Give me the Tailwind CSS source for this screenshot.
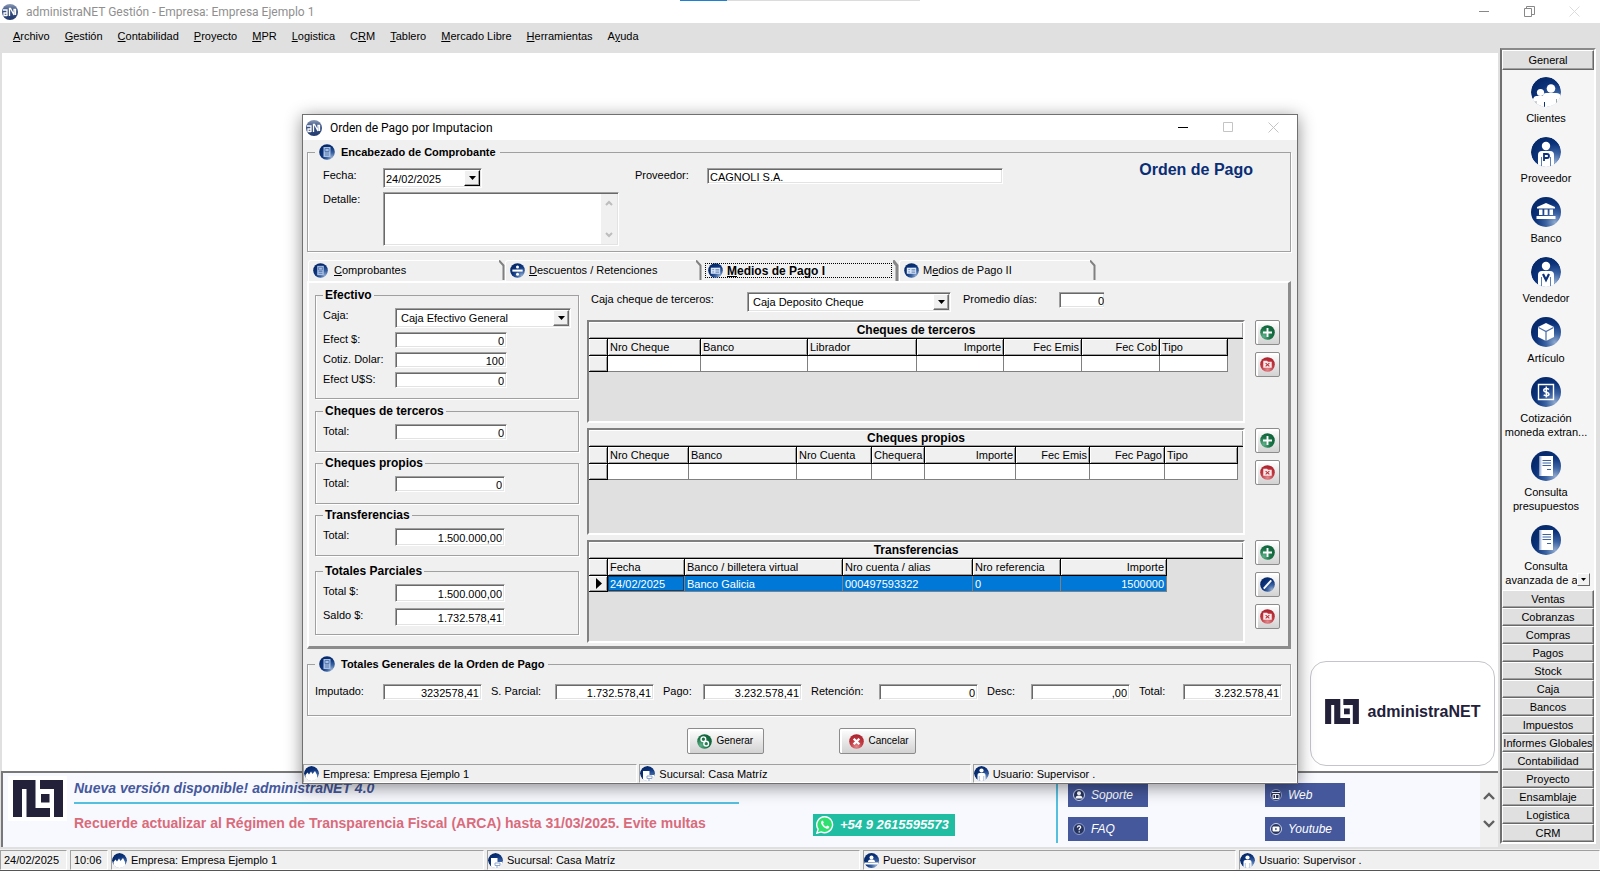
<!DOCTYPE html>
<html lang="es">
<head>
<meta charset="utf-8">
<title>administraNET Gestión - Empresa: Empresa Ejemplo 1</title>
<script src="https://cdn.jsdelivr.net/npm/@tailwindcss/browser@4"></script>
</head>
<body class="relative flex h-screen flex-col overflow-hidden bg-[#e0e0e0] font-['Liberation_Sans',Arial,sans-serif] text-[11px] leading-[14px] text-black">

<!-- Shared icon shapes -->
<svg class="absolute size-0" aria-hidden="true">
  <defs>
    <radialGradient id="navy" cx="80%" cy="85%" r="85%"><stop offset="0" stop-color="#8fa9cf"/><stop offset=".35" stop-color="#3c64a3"/><stop offset=".75" stop-color="#0b327a"/><stop offset="1" stop-color="#062a6b"/></radialGradient>
    <radialGradient id="green" cx="25%" cy="75%" r="90%"><stop offset="0" stop-color="#5fb08a"/><stop offset=".5" stop-color="#1a7547"/><stop offset="1" stop-color="#0d5f38"/></radialGradient>
    <radialGradient id="red" cx="50%" cy="85%" r="85%"><stop offset="0" stop-color="#e08a8d"/><stop offset=".5" stop-color="#c23a42"/><stop offset="1" stop-color="#a9202b"/></radialGradient>
    <linearGradient id="orb" x1="0" y1="0" x2="0" y2="1"><stop offset="0" stop-color="#8d9bb5"/><stop offset=".4" stop-color="#3c5486"/><stop offset="1" stop-color="#22396d"/></linearGradient>
    <clipPath id="disc"><circle cx="15" cy="15" r="15"/></clipPath>
  </defs>
  <symbol id="i-app" viewBox="0 0 16 16"><circle cx="8" cy="8" r="8" fill="url(#orb)"/><path d="M1 6h4v6M5 9H2v2.500h3M7.500 12V4.500h1L12 11V5.500h1.500V11" fill="none" stroke="#fff" stroke-width="1.300"/></symbol>
  <symbol id="i-clients" viewBox="0 0 30 30"><g clip-path="url(#disc)"><circle cx="15" cy="15" r="15" fill="url(#navy)"/><circle cx="20" cy="11.500" r="4.300" fill="#fff"/><path d="M12 30V19q0-3 3-3h10q4 0 5 3v11z" fill="#fff"/><circle cx="9.500" cy="15.500" r="3.600" fill="#fff"/><path d="M2 30v-8q1-3 3-3h8q3 0 3 3v8z" fill="#fff"/><path d="M13.500 25v5" stroke="#0b327a" stroke-width="1"/><path d="M25.500 22v5M5 24v3" stroke="#9aa" stroke-width="1"/></g></symbol>
  <symbol id="i-person" viewBox="0 0 30 30"><g clip-path="url(#disc)"><circle cx="15" cy="15" r="15" fill="url(#navy)"/><circle cx="15" cy="9" r="4.200" fill="#fff"/><path d="M7 30V18q0-4 4-4h8q4 0 4 4v12z" fill="#fff"/><path d="M10.500 20v10M19.500 20v10" stroke="#5f7fb2" stroke-width="1"/></g></symbol>
  <symbol id="i-provider" viewBox="0 0 30 30"><use href="#i-person"/><path d="M13 24v-7h3q2 0 2 2t-2 2h-3" fill="none" stroke="#0b327a" stroke-width="1.800"/></symbol>
  <symbol id="i-seller" viewBox="0 0 30 30"><use href="#i-person"/><path d="M12 17l3 6 3-6" fill="none" stroke="#0b327a" stroke-width="2.200"/></symbol>
  <symbol id="i-bank" viewBox="0 0 30 30"><circle cx="15" cy="15" r="15" fill="url(#navy)"/><path d="M15 6l9 4v1.500H6V10zM8 12.500h3.500V18H8zM13.300 12.500h3.400V18h-3.400zM18.500 12.500H22V18h-3.500zM5.500 19h19v3h-19z" fill="#fff"/></symbol>
  <symbol id="i-box" viewBox="0 0 30 30"><circle cx="15" cy="15" r="15" fill="url(#navy)"/><path d="M15 6l8 4v10l-8 4-8-4V10z" fill="#fff"/><path d="M7.500 10.500L15 14.500l7.500-4M15 14.500V24" fill="none" stroke="#4a6ea8" stroke-width="1.200"/></symbol>
  <symbol id="i-money" viewBox="0 0 30 30"><circle cx="15" cy="15" r="15" fill="url(#navy)"/><path d="M7.500 7.500h15v15h-15z" fill="none" stroke="#fff" stroke-width="1.400"/><path d="M18 12.300q-3-1.800-5 0-1 2 2 2.700t3 2.800q-2 2-5.300 0M15.300 9.500v11" fill="none" stroke="#fff" stroke-width="1.500"/></symbol>
  <symbol id="i-doc" viewBox="0 0 30 30"><circle cx="15" cy="15" r="15" fill="url(#navy)"/><path d="M8.500 5h13.500v20H8.500z" fill="#fff"/><path d="M9.800 5v20" stroke="#9db2d6" stroke-width="1"/><path d="M11.500 9.500h8.500M11.500 12h8.500M11.500 14.500h8.500M16 18.500h4" stroke="#3b62a2" stroke-width="1"/></symbol>
  <symbol id="i-sheet" viewBox="0 0 16 16"><circle cx="8" cy="8" r="7.800" fill="url(#navy)"/><path d="M4.500 3h7v10h-7z" fill="#a9bfe2"/><path d="M6 4.500h4v3H6zM6 9h4M6 11h4" fill="none" stroke="#4f74b0" stroke-width=".9"/></symbol>
  <symbol id="i-divide" viewBox="0 0 16 16"><circle cx="8" cy="8" r="7.800" fill="url(#navy)"/><path d="M2.500 7h11v2.200h-11z" fill="#fff"/><circle cx="8" cy="4.300" r="1.600" fill="#fff"/><circle cx="8" cy="11.900" r="1.600" fill="#fff"/></symbol>
  <symbol id="i-card" viewBox="0 0 16 16"><circle cx="8" cy="8" r="7.800" fill="url(#navy)"/><path d="M3 5h10v6.500H3z" fill="#dbe6f8"/><path d="M4.500 7h2M4.500 9.500h2M8 7h4M8 8.500h4M8 10h4" stroke="#5c80ba" stroke-width=".8"/></symbol>
  <symbol id="i-factory" viewBox="0 0 30 30"><g clip-path="url(#disc)"><circle cx="15" cy="15" r="15" fill="url(#navy)"/><path d="M3 30V18l4-5 3 4 4-6 3 5 5-6 4 8v12z" fill="#fff"/></g></symbol>
  <symbol id="i-branch" viewBox="0 0 30 30"><g clip-path="url(#disc)"><circle cx="15" cy="15" r="15" fill="url(#navy)"/><path d="M6 10h13v8h9v12H6z" fill="#fff"/><path d="M14 20h10v5H14zM18 25v5" fill="none" stroke="#8fa4cc" stroke-width="2"/></g></symbol>
  <symbol id="i-desk" viewBox="0 0 30 30"><circle cx="15" cy="15" r="15" fill="url(#navy)"/><circle cx="15" cy="9" r="4" fill="#fff"/><path d="M8 18q0-5 5-5h4q5 0 5 5zM2 19h26v4H2z" fill="#fff"/></symbol>
  <symbol id="i-add" viewBox="0 0 16 16"><circle cx="8" cy="8" r="7.800" fill="url(#green)"/><path d="M8 3.200v9.600M3.200 8h9.600" stroke="#fff" stroke-width="2"/></symbol>
  <symbol id="i-remove" viewBox="0 0 16 16"><circle cx="8" cy="8" r="7.800" fill="url(#red)"/><path d="M3.500 4h4l1 1h4v6.500h-9z" fill="#fbe9ea"/><path d="M6 6.500l4 3.500M10 6.500L6 10" stroke="#b8323b" stroke-width="1.200"/></symbol>
  <symbol id="i-edit" viewBox="0 0 16 16"><circle cx="8" cy="8" r="7.800" fill="url(#navy)"/><path d="M4 12.500L12 3.500" stroke="#fff" stroke-width="2"/></symbol>
  <symbol id="i-gears" viewBox="0 0 16 16"><circle cx="8" cy="8" r="7.800" fill="url(#green)"/><circle cx="6.800" cy="5.600" r="2.500" fill="none" stroke="#fff" stroke-width="1.500"/><circle cx="9.800" cy="10.300" r="2.500" fill="none" stroke="#fff" stroke-width="1.500"/></symbol>
  <symbol id="i-cancel" viewBox="0 0 16 16"><circle cx="8" cy="8" r="7.800" fill="url(#red)"/><path d="M5 5l6 6M11 5l-6 6" stroke="#fff" stroke-width="2.400"/></symbol>
  <symbol id="i-mark" viewBox="0 0 50 37"><path d="M0 0h22.500v28H37v9H13.500V9H9v28H0zM27 0h23v37h-9V9H27zM28 14h8.500v8.500H28z" fill="#23203a"/></symbol>
</svg>

<!-- Main window caption -->
<header class="flex h-[23px] shrink-0 items-center bg-white pl-0.5 font-[Roboto,'Noto_Sans',sans-serif] text-[12px] text-[#8f8f8f]">
  <svg class="size-4"><use href="#i-app"/></svg>
  <h1 class="ml-2">administraNET Gestión - Empresa: Empresa Ejemplo 1</h1>
  <div class="ml-auto flex gap-5">
    <button class="flex h-[23px] w-[25px] items-center justify-center" aria-label="Minimizar"><svg class="size-[11px]" viewBox="0 0 11 11"><path d="M0 5.500h10" stroke="#888"/></svg></button>
    <button class="flex h-[23px] w-[25px] items-center justify-center" aria-label="Restaurar"><svg class="size-[11px]" viewBox="0 0 11 11"><path d="M.5 2.500h7v8h-7zM2.500 2.500v-2h8v8h-3" fill="none" stroke="#888"/></svg></button>
    <button class="mr-[13px] flex h-[23px] w-[25px] items-center justify-center" aria-label="Cerrar"><svg class="size-[11px]" viewBox="0 0 11 11"><path d="M.5.5l10 10M10.500.5l-10 10" stroke="#dcdcdc"/></svg></button>
  </div>
</header>
<div class="absolute top-0 left-[680px] h-px w-[240px] border-l-[47px] border-[#1f7fd0] bg-[#dcdcdc]"></div>

<div class="flex min-h-0 flex-1">
  <div class="flex min-w-0 flex-1 flex-col">
    <nav class="flex h-[30px] shrink-0 items-center gap-[15px] pl-[13px] pb-1">
      <a href="#"><u>A</u>rchivo</a>
      <a href="#"><u>G</u>estión</a>
      <a href="#"><u>C</u>ontabilidad</a>
      <a href="#"><u>P</u>royecto</a>
      <a href="#"><u>M</u>PR</a>
      <a href="#"><u>L</u>ogistica</a>
      <a href="#">C<u>R</u>M</a>
      <a href="#"><u>T</u>ablero</a>
      <a href="#"><u>M</u>ercado Libre</a>
      <a href="#"><u>H</u>erramientas</a>
      <a href="#">A<u>y</u>uda</a>
    </nav>

    <main class="mr-0.5 ml-0.5 flex flex-1 items-end justify-end bg-white pr-[3px] pb-[5px]">
      <div class="flex h-[105px] w-[185px] items-center justify-center gap-[9px] rounded-2xl border border-[#c3c5ca] pb-1">
        <svg class="h-[25px] w-[34px]"><use href="#i-mark"/></svg>
        <span class="text-[16px] font-bold text-[#23203a]">administraNET</span>
      </div>
    </main>

    <!-- News banner -->
    <section class="mb-0.5 ml-px flex h-[76px] shrink-0 border-t-2 border-l-2 border-[#787878] bg-[#f8f9ff] mr-0.5">
      <div class="mt-[3px] ml-[5px] flex h-[45px] w-[59px] items-center justify-center bg-white"><svg class="h-[37px] w-[50px]"><use href="#i-mark"/></svg></div>
      <div class="ml-[7px] w-[665px]">
        <h2 class="mt-[5px] h-[26px] border-b-2 border-[#55bfe0] text-[14px] leading-5 font-bold text-[#45589c] italic">Nueva versión disponible! administraNET 4.0</h2>
        <p class="mt-[9px] text-[14px] leading-5 font-bold whitespace-nowrap text-[#d96b7b]">Recuerde actualizar al Régimen de Transparencia Fiscal (ARCA) hasta 31/03/2025. Evite multas</p>
      </div>
      <a href="#" class="mt-[41px] ml-[74px] flex h-[22px] w-[142px] items-center gap-1.5 bg-[#20bda3] pl-[3px] text-[13px] font-bold text-white italic">
        <svg class="size-[18px] shrink-0" viewBox="0 0 18 18"><path d="M9 .7a8 8 0 1 1-3.900 15.200L.8 17.200l1.300-4.100A8 8 0 0 1 9 .7z" fill="#2fe070" stroke="#fff" stroke-width="1.400"/><path d="M6 4.700q-1.500 1-.8 3 1.600 3.700 5.300 5 2 .4 2.700-1.300v-.9l-2-1-1.200 1.200q-2-.8-3-3l.8-1-.8-2z" fill="#fff"/></svg>
        +54 9 2615595573
      </a>
      <div class="mt-0.5 mb-1 ml-[101px] w-0.5 bg-[#55bfe0]"></div>
      <div class="mt-[10px] ml-[10px] grid grid-cols-[80px_80px] grid-rows-[24px_24px] content-start gap-x-[117px] gap-y-[10px] text-[12px] text-white italic">
        <a href="#" class="flex items-center gap-1.5 bg-[#45589c] pl-[5px]"><svg class="size-3" viewBox="0 0 12 12"><circle cx="6" cy="6" r="5.500" fill="#26335f" stroke="#cfd8f0"/><circle cx="6" cy="4.300" r="2" fill="#fff"/><path d="M2.500 9.500q0-3 3.500-3t3.500 3z" fill="#fff"/></svg>Soporte</a>
        <a href="#" class="flex items-center gap-1.5 bg-[#45589c] pl-[5px]"><svg class="size-3" viewBox="0 0 12 12"><circle cx="6" cy="6" r="5.500" fill="#26335f" stroke="#8fa0cf"/><path d="M2 3.500h8M3 5.500h6v4H3zM5.500 5.500v4" fill="none" stroke="#fff"/></svg>Web</a>
        <a href="#" class="flex items-center gap-1.5 bg-[#45589c] pl-[5px]"><svg class="size-3" viewBox="0 0 12 12"><circle cx="6" cy="6" r="5.500" fill="#26335f" stroke="#8fa0cf"/><path d="M4.300 4.500q.3-1.700 1.900-1.600 1.800.3 1.400 1.800L6.200 6.200v1M6.200 8.300v1.200" fill="none" stroke="#fff" stroke-width="1.200"/></svg>FAQ</a>
        <a href="#" class="flex items-center gap-1.5 bg-[#45589c] pl-[5px]"><svg class="size-3" viewBox="0 0 12 12"><circle cx="6" cy="6" r="5.500" fill="#26335f" stroke="#cfd8f0"/><rect x="2.500" y="3.500" width="7" height="5" rx="1" fill="#fff"/><path d="M5.300 4.800L7.300 6l-2 1.200z" fill="#26335f"/></svg>Youtube</a>
      </div>
      <div class="ml-auto flex w-[18px] flex-col items-center justify-evenly bg-[#f0f0f0]">
        <svg class="h-2 w-3" viewBox="0 0 12 8"><path d="M1 7l5-5 5 5" fill="none" stroke="#606060" stroke-width="2.400"/></svg>
        <svg class="h-2 w-3" viewBox="0 0 12 8"><path d="M1 1l5 5 5-5" fill="none" stroke="#606060" stroke-width="2.400"/></svg>
      </div>
    </section>
  </div>

  <!-- Shortcut bar -->
  <aside class="relative mt-[25px] mr-1 mb-[5px] flex w-24 shrink-0 flex-col border-2 border-t-[#8a8a8a] border-r-white border-b-white border-l-[#707070] bg-[#f5f5f5] text-center">
    <button class="h-5 shrink-0 border border-t-white border-r-[#696969] border-b-[#696969] border-l-white bg-[#e0e0e0] shadow-[inset_-1px_-1px_0_#a0a0a0]">General</button>
    <ul class="flex min-h-0 flex-1 flex-col items-center gap-3 overflow-hidden pt-[7px] pr-1 whitespace-nowrap [&_a]:flex [&_a]:flex-col [&_a]:items-center [&_a]:gap-1 [&_svg]:size-[30px]">
      <li><a href="#"><svg><use href="#i-clients"/></svg>Clientes</a></li>
      <li><a href="#"><svg><use href="#i-provider"/></svg>Proveedor</a></li>
      <li><a href="#"><svg><use href="#i-bank"/></svg>Banco</a></li>
      <li><a href="#"><svg><use href="#i-seller"/></svg>Vendedor</a></li>
      <li><a href="#"><svg><use href="#i-box"/></svg>Artículo</a></li>
      <li><a href="#"><svg><use href="#i-money"/></svg><span>Cotización<br>moneda extran...</span></a></li>
      <li><a href="#"><svg><use href="#i-doc"/></svg><span>Consulta<br>presupuestos</span></a></li>
      <li><a href="#"><svg><use href="#i-doc"/></svg><span>Consulta<br>avanzada de a...</span></a></li>
    </ul>
    <button class="absolute right-1 bottom-[256px] flex size-[13px] items-center justify-center border border-t-white border-r-[#696969] border-b-[#696969] border-l-white bg-[#f0f0f0]" aria-label="Desplazar"><svg class="h-[3px] w-[5px]" viewBox="0 0 5 3"><path d="M0 0h5L2.500 3z"/></svg></button>
    <div class="flex shrink-0 flex-col [&>button]:h-[18px] [&>button]:border [&>button]:border-t-white [&>button]:border-r-[#696969] [&>button]:border-b-[#696969] [&>button]:border-l-white [&>button]:bg-[#e0e0e0] [&>button]:whitespace-nowrap [&>button]:shadow-[inset_-1px_-1px_0_#a0a0a0]">
      <button>Ventas</button><button>Cobranzas</button><button>Compras</button><button>Pagos</button><button>Stock</button><button>Caja</button><button>Bancos</button><button>Impuestos</button><button>Informes Globales</button><button>Contabilidad</button><button>Proyecto</button><button>Ensamblaje</button><button>Logistica</button><button>CRM</button>
    </div>
  </aside>
</div>

<!-- Main status bar -->
<footer class="flex h-[22px] shrink-0 gap-[3px] border-b border-[#555] bg-[#f0f0f0] pt-px [&>div]:flex [&>div]:items-center [&>div]:gap-1 [&>div]:border [&>div]:border-t-[#a0a0a0] [&>div]:border-r-white [&>div]:border-b-white [&>div]:border-l-[#a0a0a0] [&_svg]:size-[15px]">
  <div class="w-[67px] pl-[3px]">24/02/2025</div>
  <div class="w-[38px] pl-[3px]">10:06</div>
  <div class="flex-[373]"><svg><use href="#i-factory"/></svg>Empresa: Empresa Ejemplo 1</div>
  <div class="flex-[373]"><svg><use href="#i-branch"/></svg>Sucursal: Casa Matríz</div>
  <div class="flex-[373]"><svg><use href="#i-desk"/></svg>Puesto: Supervisor</div>
  <div class="flex-[361]"><svg><use href="#i-person"/></svg>Usuario: Supervisor .</div>
</footer>

<!-- Payment order window -->
<section role="dialog" aria-labelledby="dlg" class="absolute top-[114px] right-[302px] left-[302px] border border-[#707070] bg-[#f0f0f0] shadow-[0_3px_16px_rgba(0,0,0,.45)]">
  <header class="flex h-[25px] items-center bg-white pl-[3px] font-[Roboto,'Noto_Sans',sans-serif] text-[12px]">
    <svg class="size-4"><use href="#i-app"/></svg>
    <h2 id="dlg" class="ml-2">Orden de Pago por Imputacion</h2>
    <div class="ml-auto flex gap-5 pr-[11px]">
      <button class="flex h-[25px] w-[25px] items-center justify-center" aria-label="Minimizar"><svg class="size-[11px]" viewBox="0 0 11 11"><path d="M0 5.500h10" stroke="#000"/></svg></button>
      <button class="flex h-[25px] w-[25px] items-center justify-center" aria-label="Maximizar"><svg class="size-[11px]" viewBox="0 0 11 11"><path d="M.5.5h9v9h-9z" fill="none" stroke="#c4c4c4"/></svg></button>
      <button class="flex h-[25px] w-[25px] items-center justify-center" aria-label="Cerrar"><svg class="size-[11px]" viewBox="0 0 11 11"><path d="M.5.5l10 10M10.500.5l-10 10" stroke="#c4c4c4"/></svg></button>
    </div>
  </header>

  <form class="pt-1 pr-[6px] pl-1 [&_fieldset]:border [&_fieldset]:border-[#a0a0a0] [&_fieldset]:shadow-[1px_1px_0_#fff,inset_1px_0_0_#fff] [&_input]:h-4 [&_input]:border [&_input]:border-t-[#a0a0a0] [&_input]:border-r-white [&_input]:border-b-white [&_input]:border-l-[#a0a0a0] [&_input]:bg-white [&_input]:px-0.5 [&_input]:pt-px [&_input]:shadow-[inset_1px_1px_0_#696969,inset_-1px_-1px_0_#e3e3e3] [&_label]:leading-[14px] [&_legend]:font-bold [&_select]:appearance-none [&_select]:border [&_select]:border-t-[#a0a0a0] [&_select]:border-r-white [&_select]:border-b-white [&_select]:border-l-[#a0a0a0] [&_select]:bg-white [&_select]:pl-[5px] [&_select]:shadow-[inset_1px_1px_0_#696969,inset_-1px_-1px_0_#e3e3e3]">
    <fieldset class="flex items-start pr-[37px] pb-[5px] pl-[15px]">
      <legend class="-ml-2 flex h-4 items-center gap-1.5 px-1"><svg class="size-4"><use href="#i-sheet"/></svg>Encabezado de Comprobante</legend>
      <div class="mt-2 grid grid-cols-[60px_236px] items-start gap-y-1">
        <label for="fecha">Fecha:</label>
        <div class="relative w-[99px]">
          <input id="fecha" value="24/02/2025" class="block h-5! w-full">
          <button type="button" class="absolute top-0.5 right-0.5 flex h-4 w-4 items-center justify-center border border-t-white border-r-black border-b-black border-l-white bg-[#f0f0f0] shadow-[inset_-1px_-1px_0_#a0a0a0]" aria-label="Abrir calendario"><svg class="h-1 w-[7px]" viewBox="0 0 7 4"><path d="M0 0h7L3.500 4z"/></svg></button>
        </div>
        <label for="detalle">Detalle:</label>
        <div class="relative h-[54px]">
          <textarea id="detalle" class="block h-full w-full resize-none border border-t-[#a0a0a0] border-r-white border-b-white border-l-[#a0a0a0] bg-white shadow-[inset_1px_1px_0_#696969,inset_-1px_-1px_0_#e3e3e3]"></textarea>
          <div class="absolute top-0.5 right-0.5 bottom-0.5 flex w-4 flex-col items-center justify-between bg-[#f0f0f0] py-[6px]">
            <svg class="h-[6px] w-2" viewBox="0 0 8 6"><path d="M1 5l3-3 3 3" fill="none" stroke="#bdbdbd" stroke-width="2"/></svg>
            <svg class="h-[6px] w-2" viewBox="0 0 8 6"><path d="M1 1l3 3 3-3" fill="none" stroke="#bdbdbd" stroke-width="2"/></svg>
          </div>
        </div>
      </div>
      <label for="prov" class="mt-2 ml-4 w-[72px]">Proveedor:</label>
      <input id="prov" value="CAGNOLI S.A." class="mt-2 w-[296px]">
      <strong class="ml-auto text-[16px] leading-5 text-[#0a2d75]">Orden de Pago</strong>
    </fieldset>

    <!-- Tabs -->
    <div role="tablist" class="mt-2 flex h-[21px] pl-px [&>button]:flex [&>button]:w-[197px] [&>button]:items-stretch [&_i]:flex-1 [&_i]:rounded-tl-[3px] [&_i]:border-t [&_i]:border-l [&_i]:border-white [&_i]:not-italic [&_i]:flex [&_i]:items-center [&_i]:gap-1 [&_i]:pb-0.5 [&_i]:pl-1">
      <button type="button" role="tab"><i class="gap-1.5!"><svg class="size-[15px]"><use href="#i-sheet"/></svg><span><u>C</u>omprobantes</span></i><svg class="h-5 w-[6px]" viewBox="0 0 6 20"><path d="M0 .5l4.500 5V20" fill="none" stroke="#808080" stroke-width="2"/></svg></button>
      <button type="button" role="tab"><i><svg class="size-[15px]"><use href="#i-divide"/></svg><span><u>D</u>escuentos / Retenciones</span></i><svg class="h-5 w-[6px]" viewBox="0 0 6 20"><path d="M0 .5l4.500 5V20" fill="none" stroke="#808080" stroke-width="2"/></svg></button>
      <button type="button" role="tab" aria-selected="true" class="text-[12px] font-bold"><i class="my-[3px] mr-px ml-[3px] rounded-none! border! border-dotted! border-black! pb-0! pl-0.5!"><svg class="size-[15px]"><use href="#i-card"/></svg><span><u>M</u>edios de Pago I</span></i><svg class="h-[21px] w-[6px]" viewBox="0 0 6 21"><path d="M0 .5l4 5V21" fill="none" stroke="#888" stroke-width="3"/></svg></button>
      <button type="button" role="tab"><i><svg class="size-[15px]"><use href="#i-card"/></svg><span>M<u>e</u>dios de Pago II</span></i><svg class="h-5 w-[6px]" viewBox="0 0 6 20"><path d="M0 .5l4.500 5V20" fill="none" stroke="#808080" stroke-width="2"/></svg></button>
    </div>

    <div role="tabpanel" class="flex gap-2 border-t-2 border-r-3 border-b-3 border-l-2 border-t-white border-r-[#8c8c8c] border-b-[#8c8c8c] border-l-white pr-2 pb-[3px] pl-[6px]">
      <div class="flex w-[264px] shrink-0 flex-col gap-1 pt-[5px] [&_fieldset]:grid [&_fieldset]:grid-cols-[72px_auto] [&_fieldset]:items-start [&_fieldset]:justify-start [&_fieldset]:gap-y-1 [&_fieldset]:px-[7px] [&_fieldset]:pt-[6px] [&_fieldset]:pb-[11px] [&_input]:w-28 [&_input]:text-right [&_legend]:px-0.5 [&_legend]:text-[12px]">
        <fieldset class="mb-px pb-[10px]!">
          <legend>Efectivo</legend>
          <label for="caja">Caja:</label>
          <div class="relative">
            <select id="caja" class="block h-5 w-44"><option>Caja Efectivo General</option></select>
            <span class="pointer-events-none absolute top-0.5 right-0.5 flex size-4 items-center justify-center border border-t-white border-r-[#696969] border-b-[#696969] border-l-white bg-[#f0f0f0] shadow-[inset_-1px_-1px_0_#a0a0a0]"><svg class="h-1 w-[7px]" viewBox="0 0 7 4"><path d="M0 0h7L3.500 4z"/></svg></span>
          </div>
          <label for="ef">Efect $:</label><input id="ef" value="0">
          <label for="cot">Cotiz. Dolar:</label><input id="cot" value="100">
          <label for="efu">Efect U$S:</label><input id="efu" value="0">
        </fieldset>
        <fieldset>
          <legend>Cheques de terceros</legend>
          <label for="ct">Total:</label><input id="ct" value="0">
        </fieldset>
        <fieldset>
          <legend>Cheques propios</legend>
          <label for="cp">Total:</label><input id="cp" value="0" class="w-[110px]!">
        </fieldset>
        <fieldset class="pb-[9px]!">
          <legend>Transferencias</legend>
          <label for="tr">Total:</label><input id="tr" value="1.500.000,00" class="h-[18px]! w-[110px]!">
        </fieldset>
        <fieldset class="mt-1 gap-y-[6px]! pb-2!">
          <legend>Totales Parciales</legend>
          <label for="tp">Total $:</label><input id="tp" value="1.500.000,00" class="h-[18px]! w-[110px]!">
          <label for="sp">Saldo $:</label><input id="sp" value="1.732.578,41" class="h-[18px]! w-[110px]!">
        </fieldset>
      </div>

      <div class="min-w-0 flex-1 pt-[9px]">
        <div class="mb-2 flex h-5 items-start pl-1">
          <label for="cch" class="w-[156px]">Caja cheque de terceros:</label>
          <div class="relative">
            <select id="cch" class="block h-5 w-[204px]"><option>Caja Deposito Cheque</option></select>
            <span class="pointer-events-none absolute top-0.5 right-0.5 flex size-4 items-center justify-center border border-t-white border-r-[#696969] border-b-[#696969] border-l-white bg-[#f0f0f0] shadow-[inset_-1px_-1px_0_#a0a0a0]"><svg class="h-1 w-[7px]" viewBox="0 0 7 4"><path d="M0 0h7L3.500 4z"/></svg></span>
          </div>
          <label for="pd" class="ml-3 w-24">Promedio días:</label>
          <input id="pd" value="0" class="w-[45px] border-r-0! pr-0! text-right">
        </div>

        <!-- Grids with their row buttons -->
        <div class="flex flex-col gap-[5px] [&_aside]:flex [&_aside]:flex-col [&_aside]:gap-[7px] [&_aside>button]:flex [&_aside>button]:size-[25px] [&_aside>button]:items-center [&_aside>button]:justify-center [&_aside>button]:rounded-[2px] [&_aside>button]:border [&_aside>button]:border-[#8c8c8c] [&_aside>button]:bg-linear-to-b [&_aside>button]:from-white [&_aside>button]:to-[#d2d2d2] [&_aside>button]:shadow-[inset_2px_2px_0_#fff] [&_aside_svg]:size-[15px] [&>div]:flex [&>div]:justify-between [&_h3]:h-[17px] [&_h3]:border-b [&_h3]:border-black [&_h3]:text-center [&_h3]:text-[12px] [&_h3]:leading-4 [&_h3]:font-bold [&_h3]:shadow-[inset_1px_1px_0_#fff,inset_-1px_-1px_0_#a0a0a0] [&_h3]:bg-[#f0f0f0] [&_section]:w-[658px] [&_section]:border-2 [&_section]:border-t-[#808080] [&_section]:border-r-white [&_section]:border-b-white [&_section]:border-l-[#808080] [&_section]:bg-[#e0e0e0] [&_table]:w-0 [&_table]:table-fixed [&_table]:border-separate [&_table]:border-spacing-0 [&_table]:whitespace-nowrap [&_thead_th]:h-[17px] [&_thead_th]:border-r [&_thead_th]:border-b [&_thead_th]:border-black [&_thead_th]:px-0.5 [&_thead_th]:text-left [&_thead_th]:font-normal [&_thead_th]:bg-[#f0f0f0] [&_thead_th]:shadow-[inset_1px_1px_0_#fff,inset_-1px_-1px_0_#a0a0a0] [&_tbody_th]:border-r [&_tbody_th]:border-b [&_tbody_th]:border-black [&_tbody_th]:bg-[#f0f0f0] [&_tbody_th]:shadow-[inset_1px_1px_0_#fff,inset_-1px_-1px_0_#a0a0a0] [&_td]:h-4 [&_td]:border-r [&_td]:border-b [&_td]:border-[#808080] [&_td]:bg-white [&_td]:px-0.5">
          <div>
            <section class="h-[103px]">
              <h3 id="g1">Cheques de terceros</h3>
              <table aria-labelledby="g1">
                <colgroup><col class="w-[19px]"><col class="w-[93px]"><col class="w-[107px]"><col class="w-[109px]"><col class="w-[87px]"><col class="w-[78px]"><col class="w-[78px]"><col class="w-[68px]"></colgroup>
                <thead><tr><th></th><th>Nro Cheque</th><th>Banco</th><th>Librador</th><th class="text-right!">Importe</th><th class="text-right!">Fec Emis</th><th class="text-right!">Fec Cob</th><th>Tipo</th></tr></thead>
                <tbody><tr><th></th><td></td><td></td><td></td><td></td><td></td><td></td><td></td></tr></tbody>
              </table>
            </section>
            <aside>
              <button type="button" aria-label="Agregar cheque de terceros"><svg><use href="#i-add"/></svg></button>
              <button type="button" aria-label="Quitar cheque de terceros"><svg><use href="#i-remove"/></svg></button>
            </aside>
          </div>
          <div>
            <section class="h-[107px]">
              <h3 id="g2">Cheques propios</h3>
              <table aria-labelledby="g2">
                <colgroup><col class="w-[19px]"><col class="w-[81px]"><col class="w-[108px]"><col class="w-[75px]"><col class="w-[53px]"><col class="w-[91px]"><col class="w-[74px]"><col class="w-[75px]"><col class="w-[73px]"></colgroup>
                <thead><tr><th></th><th>Nro Cheque</th><th>Banco</th><th>Nro Cuenta</th><th>Chequera</th><th class="text-right!">Importe</th><th class="text-right!">Fec Emis</th><th class="text-right!">Fec Pago</th><th>Tipo</th></tr></thead>
                <tbody><tr><th></th><td></td><td></td><td></td><td></td><td></td><td></td><td></td><td></td></tr></tbody>
              </table>
            </section>
            <aside>
              <button type="button" aria-label="Agregar cheque propio"><svg><use href="#i-add"/></svg></button>
              <button type="button" aria-label="Quitar cheque propio"><svg><use href="#i-remove"/></svg></button>
            </aside>
          </div>
          <div>
            <section class="h-[103px]">
              <h3 id="g3">Transferencias</h3>
              <table aria-labelledby="g3">
                <colgroup><col class="w-[19px]"><col class="w-[77px]"><col class="w-[158px]"><col class="w-[130px]"><col class="w-[88px]"><col class="w-[106px]"></colgroup>
                <thead><tr><th></th><th>Fecha</th><th>Banco / billetera virtual</th><th>Nro cuenta / alias</th><th>Nro referencia</th><th class="text-right!">Importe</th></tr></thead>
                <tbody><tr class="text-white [&>td]:bg-[#0078d7]!"><th><svg class="ml-[7px] h-[11px] w-[6px]" viewBox="0 0 6 11"><path d="M0 0l6 5.500L0 11z" fill="#000"/></svg></th><td class="shadow-[inset_0_0_0_1px_#12406b]">24/02/2025</td><td>Banco Galicia</td><td>000497593322</td><td>0</td><td class="text-right">1500000</td></tr></tbody>
              </table>
            </section>
            <aside>
              <button type="button" aria-label="Agregar transferencia"><svg><use href="#i-add"/></svg></button>
              <button type="button" aria-label="Editar transferencia"><svg><use href="#i-edit"/></svg></button>
              <button type="button" aria-label="Quitar transferencia"><svg><use href="#i-remove"/></svg></button>
            </aside>
          </div>
        </div>
      </div>
    </div>

    <fieldset class="mt-[7px] flex items-start gap-[9px] px-[7px] pt-3 pb-[15px] [&>div]:flex [&_input]:w-[99px] [&_input]:text-right">
      <legend class="flex h-4 items-center gap-1.5 px-1"><svg class="size-4"><use href="#i-sheet"/></svg>Totales Generales de la Orden de Pago</legend>
      <div><label for="t1" class="w-[68px]">Imputado:</label><input id="t1" value="3232578,41"></div>
      <div><label for="t2" class="w-16">S. Parcial:</label><input id="t2" value="1.732.578,41"></div>
      <div><label for="t3" class="w-10">Pago:</label><input id="t3" value="3.232.578,41"></div>
      <div><label for="t4" class="w-[68px]">Retención:</label><input id="t4" value="0"></div>
      <div><label for="t5" class="w-11">Desc:</label><input id="t5" value=",00"></div>
      <div><label for="t6" class="w-11">Total:</label><input id="t6" value="3.232.578,41"></div>
    </fieldset>

    <div class="mt-3 mb-[10px] flex justify-center gap-[75px] pl-1 text-[10px] [&>button]:flex [&>button]:h-[26px] [&>button]:w-[77px] [&>button]:items-center [&>button]:gap-[5px] [&>button]:rounded-[2px] [&>button]:border [&>button]:border-[#8c8c8c] [&>button]:bg-linear-to-b [&>button]:from-white [&>button]:to-[#d2d2d2] [&>button]:pl-[9px] [&>button]:shadow-[inset_2px_2px_0_#fff] [&_svg]:size-[15px] [&_svg]:shrink-0">
      <button type="button"><svg><use href="#i-gears"/></svg>Generar</button>
      <button type="button"><svg><use href="#i-cancel"/></svg>Cancelar</button>
    </div>
  </form>

  <footer class="flex h-[19px] gap-0.5 [&>div]:flex [&>div]:items-center [&>div]:gap-1 [&>div]:border [&>div]:border-t-[#a0a0a0] [&>div]:border-r-white [&>div]:border-b-white [&>div]:border-l-[#a0a0a0] [&_svg]:size-[15px]">
    <div class="flex-[334]"><svg><use href="#i-factory"/></svg>Empresa: Empresa Ejemplo 1</div>
    <div class="flex-[331]"><svg><use href="#i-branch"/></svg>Sucursal: Casa Matríz</div>
    <div class="flex-[324]"><svg><use href="#i-person"/></svg>Usuario: Supervisor .</div>
  </footer>
</section>
</body>
</html>
